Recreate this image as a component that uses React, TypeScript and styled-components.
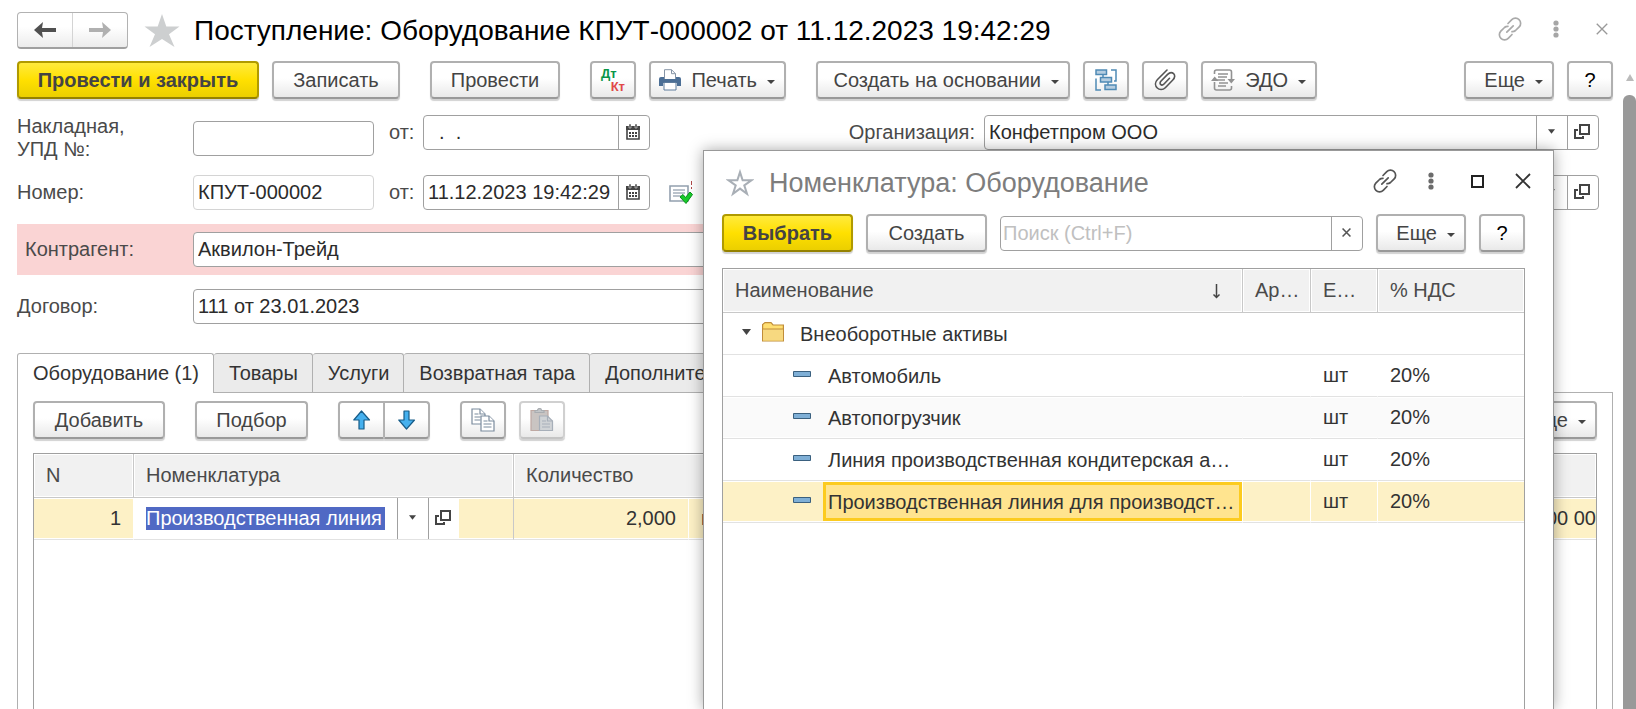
import React from 'react';
import styled, { createGlobalStyle, css } from 'styled-components';

const GlobalStyle = createGlobalStyle`
  *, *::before, *::after { box-sizing: border-box; }
  html, body, #root { height: 100%; }
  body { margin: 0; background: #fff; overflow: hidden; }
  body, button, input { font-family: "Liberation Sans", Arial, sans-serif; font-size: 20px; color: #333; }
  svg { display: block; flex: none; }
`;

const Screen = styled.div`
  position: relative;
  display: flex;
  flex-direction: column;
  height: 100vh;
  min-height: 560px;
  overflow: hidden;
`;

const Header = styled.header`
  display: flex;
  align-items: center;
  height: 61px;
  padding: 0 22px 0 17px;
`;

const NavGroup = styled.div`
  display: flex;
  width: 111px;
  height: 37px;
  border: 1px solid #b2b2b2;
  border-bottom: 2px solid #a0a0a0;
  border-radius: 4px;
  background: linear-gradient(#fff 40%, #ececec);
`;

const NavButton = styled.button`
  flex: 1;
  display: grid;
  place-items: center;
  padding: 0;
  border: 0;
  background: none;
  & + & { border-left: 1px solid #d4d4d4; }
`;

const PageTitle = styled.h1`
  flex: 1;
  margin: 0;
  font-size: 28px;
  line-height: 32px;
  font-weight: 400;
  color: #000;
  white-space: nowrap;
`;

const GhostButton = styled.button`
  display: grid;
  place-items: center;
  padding: 0;
  border: 0;
  background: none;
`;

const ToolButton = styled(GhostButton)`
  width: 24px;
  height: 24px;
`;

const FavButton = styled(GhostButton)`
  margin: 0 14px 0 16px;
`;

const WindowTools = styled.div`
  display: flex;
  align-items: center;
  gap: 22px;
  padding-bottom: 3px;
`;

const Body = styled.div`
  flex: 1;
  display: flex;
  min-height: 0;
`;

const Main = styled.main`
  flex: 1;
  display: flex;
  flex-direction: column;
  min-width: 0;
  padding: 0 10px 0 17px;
`;

const ScrollTrack = styled.div`
  display: flex;
  flex-direction: column;
  align-items: center;
  width: 13px;
  padding-top: 13px;
`;

const ScrollThumb = styled.div`
  flex: 1;
  width: 13px;
  margin-top: 14px;
  border-radius: 6px 6px 0 0;
  background: #999;
`;

const Toolbar = styled.div`
  display: flex;
  gap: 30px;
  height: 38px;
`;

const Group = styled.div<{ $end?: boolean }>`
  display: flex;
  gap: 13px;
  ${p => p.$end && css`margin-left: auto;`}
`;

const Button = styled.button<{ $w: number; $primary?: boolean; $menu?: boolean }>`
  display: flex;
  align-items: center;
  justify-content: ${p => (p.$menu ? 'flex-end' : 'center')};
  gap: 10px;
  flex: none;
  width: ${p => p.$w}px;
  height: 38px;
  padding: ${p => (p.$menu ? '0 9px 0 10px' : '0')};
  border: 2px solid #b0b0b0;
  border-bottom-color: #999;
  border-radius: 4px;
  background: linear-gradient(#fff 45%, #e9e9e9);
  box-shadow: 0 2px 1px #d2d2d2;
  color: #444;
  line-height: 24px;
  white-space: nowrap;
  ${p => p.$primary && css`
    border-color: #b09a00;
    border-bottom-color: #948100;
    background: linear-gradient(#ffea3d, #ffe000 50%, #ebcf00);
    font-weight: 700;
  `}
  &:disabled { border-color: #d0d0d0; border-bottom-color: #c4c4c4; }
`;

const HelpButton = styled(Button)`
  color: #000;
`;

const SplitButton = styled.div`
  display: flex;
  button:first-child { border-radius: 4px 0 0 4px; border-right-width: 1px; }
  button:last-child { border-radius: 0 4px 4px 0; border-left-width: 1px; }
`;

const Postings = styled.span`
  display: flex;
  flex-direction: column;
  width: 24px;
  font-size: 13px;
  font-weight: 700;
  line-height: 13px;
  text-align: left;
  color: #0a9648;
  span:last-child { color: #e04848; text-align: right; }
`;

const Form = styled.form`
  display: grid;
  grid-template-columns: 1fr 1fr;
  column-gap: 24px;
  padding: 16px 14px 0 0;
`;

const Row = styled.div<{ $h: number; $top?: boolean; $alert?: boolean }>`
  grid-column: 1;
  display: flex;
  align-items: ${p => (p.$top ? 'flex-start' : 'center')};
  height: ${p => p.$h}px;
  ${p => p.$alert && css`
    background: #fad4d4;
    label { padding-left: 8px; }
  `}
`;

const RightRow = styled(Row)`
  grid-column: 2;
`;

const Label = styled.label`
  flex: none;
  width: 176px;
  line-height: 23px;
  color: #4a4a4a;
`;

const DateLabel = styled.label`
  flex: none;
  width: 49px;
  padding-left: 15px;
  line-height: 35px;
  color: #4a4a4a;
`;

const SideLabel = styled.label`
  flex: none;
  width: 164px;
  padding-right: 9px;
  line-height: 35px;
  text-align: right;
  color: #4a4a4a;
`;

const Field = styled.div<{ $w?: number; $quiet?: boolean; $mid?: boolean }>`
  display: flex;
  ${p => (p.$w ? css`flex: none; width: ${p.$w}px;` : css`flex: 1; min-width: 0;`)}
  height: 35px;
  border: 1px solid ${p => (p.$quiet ? '#d4d4d4' : '#a0a0a0')};
  border-radius: 4px;
  background: #fff;
  ${p => p.$mid && css`align-self: center;`}
`;

const Input = styled.input`
  flex: 1;
  min-width: 0;
  padding: 0 4px;
  border: 0;
  outline: 0;
  background: none;
  color: #2b2b2b;
  &::placeholder { color: #c0c0c0; opacity: 1; }
`;

const SearchInput = styled(Input)`
  padding: 0 2px;
`;

const Addon = styled.button`
  display: grid;
  place-items: center;
  flex: none;
  width: 31px;
  padding: 0 2px 2px 0;
  border: 0;
  border-left: 1px solid #a0a0a0;
  background: none;
`;

const StatusIcon = styled.span`
  padding-left: 19px;
`;

const Tabs = styled.div`
  display: flex;
  height: 40px;
  margin-top: 15px;
  border-bottom: 1px solid #b0b0b0;
`;

const Tab = styled.button<{ $active?: boolean }>`
  flex: none;
  height: ${p => (p.$active ? 40 : 39)}px;
  padding: 0 14px 0 15px;
  border: 1px solid #b0b0b0;
  border-width: 1px 1px 0 0;
  border-radius: 3px 3px 0 0;
  background: #ebebeb;
  color: #333;
  white-space: nowrap;
  ${p => p.$active && css`border-left-width: 1px; background: #fff;`}
`;

const TabPanel = styled.section`
  flex: 1;
  display: flex;
  flex-direction: column;
  min-height: 0;
  padding: 8px 15px 0;
  border: 1px solid #b0b0b0;
  border-width: 0 1px;
`;

const TableFrame = styled.div<{ $gap: number }>`
  flex: 1;
  min-height: 0;
  margin-top: ${p => p.$gap}px;
  border: 1px solid #a0a0a0;
  border-bottom: 0;
  overflow: hidden;
`;

const Table = styled.table`
  width: 100%;
  table-layout: fixed;
  border-collapse: separate;
  border-spacing: 0;
`;

const Th = styled.th`
  height: 44px;
  padding: 0 12px;
  border-right: 1px solid #c8c8c8;
  border-bottom: 1px solid #c8c8c8;
  background: #f1f1f1;
  box-shadow: inset 0 0 0 1px #fff;
  color: #4a4a4a;
  font-weight: 400;
  text-align: left;
  white-space: nowrap;
  &:last-child { border-right: 0; }
`;

const SortHead = styled.span`
  display: flex;
  align-items: center;
  justify-content: space-between;
  padding-right: 9px;
`;

const Tr = styled.tr<{ $shade?: boolean; $selected?: boolean }>`
  background: ${p => (p.$selected ? '#fdf1c6' : p.$shade ? '#fafafa' : '#fff')};
`;

const Td = styled.td<{ $right?: boolean; $line?: boolean; $flush?: boolean; $split?: boolean }>`
  height: 42px;
  padding: 0 ${p => (p.$flush ? 0 : 12)}px;
  border-right: 1px solid ${p => (p.$line ? '#c8c8c8' : p.$split ? '#fff' : 'transparent')};
  border-bottom: 1px solid #e2e2e2;
  box-shadow: inset 0 1px 0 #fff, inset 0 -1px 0 #fff;
  text-align: ${p => (p.$right ? 'right' : 'left')};
  white-space: nowrap;
  overflow: hidden;
  &:last-child { border-right: 0; }
`;

const Editor = styled.div`
  display: flex;
  width: 325px;
  height: 41px;
  background: #fff;
`;

const EditorText = styled.div`
  flex: 1;
  display: flex;
  align-items: center;
  padding: 0 12px;
`;

const SelectedInput = styled.input`
  width: 100%;
  height: 23px;
  padding: 0;
  border: 0;
  outline: 0;
  background: #5069c4;
  color: #fff;
`;

const Dialog = styled.section`
  position: absolute;
  top: 150px;
  left: 703px;
  right: 82px;
  bottom: 0;
  display: flex;
  flex-direction: column;
  padding: 0 28px 0 18px;
  border: 1px solid #999;
  border-bottom: 0;
  background: #fff;
  box-shadow: 0 0 14px rgba(0, 0, 0, 0.35);
`;

const DialogHeader = styled.div`
  display: flex;
  align-items: center;
  height: 63px;
  margin-right: -10px;
  padding-left: 4px;
`;

const DialogTitle = styled.h2`
  flex: 1;
  margin: 0 0 0 15px;
  font-size: 27px;
  line-height: 32px;
  font-weight: 400;
  color: #7d7d7d;
  white-space: nowrap;
`;

const DialogBar = styled.div`
  display: flex;
  align-items: center;
  gap: 13px;
`;

const TreeCell = styled.div`
  display: flex;
  align-items: center;
  height: 41px;
`;

const Indent = styled.span<{ $w: number; $pad: number }>`
  flex: none;
  display: flex;
  align-items: center;
  gap: 11px;
  width: ${p => p.$w}px;
  padding: 0 0 4px ${p => p.$pad}px;
`;

const ItemText = styled.span<{ $focus?: boolean }>`
  flex: 1;
  height: 39px;
  padding-left: 2px;
  border: 3px solid ${p => (p.$focus ? '#fccb1f' : 'transparent')};
  background: ${p => (p.$focus ? '#ffe48f' : 'transparent')};
  line-height: 34px;
`;

const MenuMark = styled.span`
  padding-top: 3px;
`;

const Caret = () => (
  <MenuMark>
    <svg width="8" height="4" viewBox="0 0 8 4"><path d="M0 0h8L4 4z" fill="#444" /></svg>
  </MenuMark>
);

const DropCaret = ({ wide }: { wide?: boolean }) => (
  <svg width={wide ? 9 : 7} height={wide ? 6 : 5} viewBox="0 0 9 6"><path d="M0 0h9L4.5 6z" fill="#444" /></svg>
);

const OpenIcon = () => (
  <svg width="16" height="16" viewBox="0 0 16 16" fill="none" stroke="#444" strokeWidth="2">
    <path d="M6 1h9v9H6z" /><path d="M4 6H1v8h8v-2" />
  </svg>
);

const CalendarIcon = () => (
  <svg width="14" height="16" viewBox="0 0 14 16">
    <path d="M1 3h12v12H1z" fill="#fff" stroke="#444" strokeWidth="1.6" />
    <path d="M0 2h14v4H0z" fill="#444" /><path d="M3 0h2v4H3zM9 0h2v4H9z" fill="#444" stroke="#fff" strokeWidth=".5" />
    <path d="M3 8h2v2H3zM6 8h2v2H6zM9 8h2v2H9zM3 11h2v2H3zM6 11h2v2H6zM9 11h2v2H9z" fill="#444" />
  </svg>
);

const ArrowIcon = ({ color, flip }: { color: string; flip?: boolean }) => (
  <svg width="22" height="16" viewBox="0 0 22 16">
    <path d={flip ? 'M0 6h14L13 0l9 8-9 8 1-6H0z' : 'M22 6H8l1-6L0 8l9 8-1-6h14z'} fill={color} />
  </svg>
);

const StarIcon = ({ size, filled }: { size: number; filled?: boolean }) => (
  <svg width={size} height={size} viewBox="0 0 36 36">
    <path
      d={filled ? 'M18 1l4.3 12.500H35.500L25 21.300 30.500 34 18 26 5.500 34 11 21.300.5 13.500h13.200z' : 'M18 4l3.400 10.600h11.100l-9 6.500 3.500 10.700L18 25.200l-9 6.600 3.500-10.700-9-6.500h11.100z'}
      fill={filled ? '#cdcfd0' : 'none'} stroke={filled ? 'none' : '#a9afb6'} strokeWidth="2.600"
    />
  </svg>
);

const LinkIcon = ({ color }: { color: string }) => (
  <svg width="24" height="24" viewBox="0 0 24 24" fill="none" stroke={color} strokeWidth="1.7" strokeLinecap="round">
    <path d="M10 6.500l3.800-3.800a4.900 4.900 0 0 1 7.400 7.100l-3.700 3.700a4.900 4.900 0 0 1-3.500 1.200" />
    <path d="M14 17.500l-3.800 3.800a4.900 4.900 0 0 1-7.400-7.100l3.700-3.700a4.900 4.900 0 0 1 3.500-1.200" />
    <path d="M8.800 15.200l6.400-6.400" />
  </svg>
);

const DotsIcon = ({ color }: { color: string }) => (
  <svg width="6" height="18" viewBox="0 0 6 18" fill={color}>
    <circle cx="3" cy="3" r="2.600" /><circle cx="3" cy="9" r="2.600" /><circle cx="3" cy="15" r="2.600" />
  </svg>
);

const CloseIcon = ({ size, color }: { size: number; color: string }) => (
  <svg width={size} height={size} viewBox="0 0 16 16" stroke={color} strokeWidth={size < 12 ? 2.8 : 1.8}><path d="M1 1l14 14M15 1L1 15" /></svg>
);

const SquareIcon = () => (
  <svg width="13" height="13" viewBox="0 0 13 13"><path d="M1 1h11v11H1z" fill="none" stroke="#222" strokeWidth="2" /></svg>
);

const PrinterIcon = () => (
  <svg width="22" height="22" viewBox="0 0 22 22">
    <path d="M5.500 10V.7h7l4 4V10" fill="#fff" stroke="#8594a6" />
    <path d="M12.500.7v4h4" fill="none" stroke="#8594a6" />
    <path d="M2 8h3v2h12V8h3q2 0 2 2v7h-4v-3H4v3H0v-7q0-2 2-2z" fill="#4c6f96" />
    <path d="M5 13.500h12V21H5z" fill="#fff" stroke="#5f7c9c" />
  </svg>
);

const StructureIcon = () => (
  <svg width="22" height="22" viewBox="0 0 22 22" fill="#b5cde0" stroke="#4f8ab5" strokeWidth="1.500">
    <path d="M1 1h10.500v4.500H1zM5.500 8.500h11v4.500h-11zM10 16h11v4.500H10z" />
    <path d="M16 1h5v11h-2M1 9.500v11.500h5M8 5.500v3M13 13v3" fill="none" />
  </svg>
);

const ClipIcon = () => (
  <svg width="22" height="22" viewBox="0 0 22 22" fill="none" stroke="#555" strokeWidth="1.600" strokeLinecap="round">
    <path d="M13 1L3.500 10.500c-3 3-2.200 6.500-.2 8.500s5.500 2.200 8-.3l7.500-7.700c2.500-2.500 2.200-5 .8-6.300s-3.800-1.500-6 .7l-6.500 6.600c-1.200 1.200-1.300 2.600-.5 3.400s2.200.8 3.400-.4l5.500-5.700" />
  </svg>
);

const EdoIcon = () => (
  <svg width="24" height="22" viewBox="0 0 24 22" fill="none" stroke="#929292" strokeWidth="1.600">
    <path d="M3.500 5V3q0-2 2-2h13q2 0 2 2v8M3.500 13v6q0 2 2 2h13q2 0 2-2v-2" />
    <path d="M7 5h10M7 8h9M6 11h8M8 14h9M7 17h8" strokeWidth="1.300" />
    <path d="M0 12l3.700-4.500L7.500 12zM16.500 10h7.500l-3.700 4.500z" fill="#929292" stroke="none" />
  </svg>
);

const BlueArrow = ({ down }: { down?: boolean }) => (
  <svg width="18" height="20" viewBox="0 0 18 20">
    <path d={down ? 'M6 1h5v9h5.500L8.500 19 .8 10H6z' : 'M6 19h5v-9h5.500L8.500 1 .8 10H6z'} fill="#45b0ee" stroke="#175c88" strokeWidth="1.200" strokeLinejoin="round" />
  </svg>
);

const CopyIcon = () => (
  <svg width="24" height="24" viewBox="0 0 24 24" fill="#fff" stroke="#7b8b9d" strokeWidth="1.200">
    <path d="M1 1h8l5 5v10H1z" /><path d="M9 1v5h5M3.500 6h4M3.500 9h6M3.500 12h6" />
    <path d="M10 8h8l5 5v10H10z" /><path d="M18 8v5h5M12.500 13h4M12.500 16h8M12.500 19h8" />
  </svg>
);

const PasteIcon = () => (
  <svg width="24" height="24" viewBox="0 0 24 24" strokeWidth="1.200">
    <path d="M1 2.500h17v20H1z" fill="#c9c4c2" stroke="#bfa9a3" />
    <path d="M5 4.500V2.500h2.500a2 2 0 0 1 4 0H14v2z" fill="#c2c5c8" stroke="#a9adb1" />
    <path d="M9.500 8h8l5 5v9.500h-13z" fill="#d0d3d6" stroke="#a7afb9" />
    <path d="M17.500 8v5h5M12 13h4M12 16h8M12 19h8" fill="none" stroke="#a7afb9" />
  </svg>
);

const PostedIcon = () => (
  <svg width="24" height="24" viewBox="0 0 24 24">
    <path d="M1 5h18v15H1z" fill="#fff" stroke="#93a0ae" strokeWidth="1.600" />
    <path d="M4 9h12M4 12h12M4 15h8" stroke="#a5b0bc" strokeWidth="1.500" />
    <path d="M11 16l3-2.500 2.500 3L21 11l2.500 2.500L17 22.500z" fill="#19cb2a" stroke="#0a8f1b" />
    <path d="M22.500 0v4M22.500 6v2" stroke="#b04a4a" />
  </svg>
);

const SortIcon = () => (
  <svg width="9" height="16" viewBox="0 0 9 16"><path d="M4.500 1v13M1.500 11.500l3 3 3-3" fill="none" stroke="#444" strokeWidth="1.500" /></svg>
);

const FolderIcon = () => (
  <svg width="22" height="20" viewBox="0 0 22 20">
    <path d="M.6 19V2.500L3 .6h6l2 2.400h10.400v16z" fill="#ffdf72" stroke="#c08d3a" strokeWidth="1.200" />
    <path d="M1 7h20v11.500H1z" fill="#f7d980" /><path d="M1 7h20" stroke="#c08d3a" />
  </svg>
);

const ItemIcon = () => (
  <svg width="18" height="6" viewBox="0 0 18 6"><path d="M.5.5h17v5H.5z" fill="#7fafd6" stroke="#3a607f" /></svg>
);

const ITEMS = [
  { name: 'Автомобиль' },
  { name: 'Автопогрузчик', shade: true },
  { name: 'Линия производственная кондитерская а…' },
  { name: 'Производственная линия для производст…', selected: true },
];

const MoreButton = () => <Button type="button" $w={90} $menu>Еще<Caret /></Button>;

const PickerDialog = () => (
  <Dialog role="dialog" aria-labelledby="picker-title">
    <DialogHeader>
      <GhostButton type="button" aria-label="В избранное"><StarIcon size={28} /></GhostButton>
      <DialogTitle id="picker-title">Номенклатура: Оборудование</DialogTitle>
      <WindowTools>
        <ToolButton type="button" aria-label="Ссылка"><LinkIcon color="#555" /></ToolButton>
        <ToolButton type="button" aria-label="Меню"><DotsIcon color="#6b6b6b" /></ToolButton>
        <ToolButton type="button" aria-label="Развернуть"><SquareIcon /></ToolButton>
        <ToolButton type="button" aria-label="Закрыть"><CloseIcon size={16} color="#333" /></ToolButton>
      </WindowTools>
    </DialogHeader>
    <DialogBar>
      <Button type="button" $w={131} $primary>Выбрать</Button>
      <Button type="button" $w={121}>Создать</Button>
      <Field>
        <SearchInput aria-label="Поиск" placeholder="Поиск (Ctrl+F)" />
        <Addon type="button" aria-label="Очистить"><CloseIcon size={9} color="#555" /></Addon>
      </Field>
      <MoreButton />
      <HelpButton type="button" $w={46}>?</HelpButton>
    </DialogBar>
    <TableFrame $gap={16}>
      <Table>
        <colgroup><col /><col width="68" /><col width="67" /><col width="146" /></colgroup>
        <thead>
          <tr>
            <Th><SortHead>Наименование<SortIcon /></SortHead></Th>
            <Th>Ар…</Th>
            <Th>Е…</Th>
            <Th>% НДС</Th>
          </tr>
        </thead>
        <tbody>
          <Tr>
            <Td colSpan={4} $flush>
              <TreeCell>
                <Indent $w={72} $pad={19}><DropCaret wide /><FolderIcon /></Indent>
                <ItemText>Внеоборотные активы</ItemText>
              </TreeCell>
            </Td>
          </Tr>
          {ITEMS.map(item => (
            <Tr key={item.name} $shade={item.shade} $selected={item.selected}>
              <Td $flush $split={item.selected}>
                <TreeCell>
                  <Indent $w={100} $pad={70}><ItemIcon /></Indent>
                  <ItemText $focus={item.selected}>{item.name}</ItemText>
                </TreeCell>
              </Td>
              <Td $split={item.selected} />
              <Td $split={item.selected}>шт</Td>
              <Td>20%</Td>
            </Tr>
          ))}
        </tbody>
      </Table>
    </TableFrame>
  </Dialog>
);

const App = () => (
  <>
    <GlobalStyle />
    <Screen>
      <Header>
        <NavGroup>
          <NavButton type="button" aria-label="Назад"><ArrowIcon color="#505050" /></NavButton>
          <NavButton type="button" aria-label="Вперед"><ArrowIcon color="#b0b0b0" flip /></NavButton>
        </NavGroup>
        <FavButton type="button" aria-label="В избранное"><StarIcon size={36} filled /></FavButton>
        <PageTitle>Поступление: Оборудование КПУТ-000002 от 11.12.2023 19:42:29</PageTitle>
        <WindowTools>
          <ToolButton type="button" aria-label="Ссылка"><LinkIcon color="#aaa" /></ToolButton>
          <ToolButton type="button" aria-label="Меню"><DotsIcon color="#a6a6a6" /></ToolButton>
          <ToolButton type="button" aria-label="Закрыть"><CloseIcon size={12} color="#999" /></ToolButton>
        </WindowTools>
      </Header>

      <Body>
        <Main>
          <Toolbar>
            <Group>
              <Button type="button" $w={242} $primary>Провести и закрыть</Button>
              <Button type="button" $w={128}>Записать</Button>
            </Group>
            <Group><Button type="button" $w={130}>Провести</Button></Group>
            <Group>
              <Button type="button" $w={46}><Postings><span>Дт</span><span>Кт</span></Postings></Button>
              <Button type="button" $w={137} $menu><PrinterIcon />Печать<Caret /></Button>
            </Group>
            <Group>
              <Button type="button" $w={254} $menu>Создать на основании<Caret /></Button>
              <Button type="button" $w={46} aria-label="Структура"><StructureIcon /></Button>
              <Button type="button" $w={46} aria-label="Файлы"><ClipIcon /></Button>
              <Button type="button" $w={116} $menu><EdoIcon />ЭДО<Caret /></Button>
            </Group>
            <Group $end>
              <MoreButton />
              <HelpButton type="button" $w={46}>?</HelpButton>
            </Group>
          </Toolbar>

          <Form>
            <Row $h={46} $top>
              <Label htmlFor="invoice">Накладная,<br />УПД №:</Label>
              <Field $w={181} $mid><Input id="invoice" /></Field>
              <DateLabel htmlFor="invoice-date">от:</DateLabel>
              <Field $w={227}>
                <Input id="invoice-date" defaultValue="  .  ." />
                <Addon type="button" aria-label="Календарь"><CalendarIcon /></Addon>
              </Field>
            </Row>
            <RightRow $h={46} $top>
              <SideLabel htmlFor="org">Организация:</SideLabel>
              <Field>
                <Input id="org" defaultValue="Конфетпром ООО" />
                <Addon type="button" aria-label="Список"><DropCaret /></Addon>
                <Addon type="button" aria-label="Открыть"><OpenIcon /></Addon>
              </Field>
            </RightRow>
            <Row $h={63}>
              <Label htmlFor="number">Номер:</Label>
              <Field $w={181} $quiet><Input id="number" defaultValue="КПУТ-000002" /></Field>
              <DateLabel htmlFor="number-date">от:</DateLabel>
              <Field $w={227}>
                <Input id="number-date" defaultValue="11.12.2023 19:42:29" />
                <Addon type="button" aria-label="Календарь"><CalendarIcon /></Addon>
              </Field>
              <StatusIcon><PostedIcon /></StatusIcon>
            </Row>
            <RightRow $h={63}>
              <SideLabel />
              <Field>
                <Input aria-label="Склад" />
                <Addon type="button" aria-label="Список"><DropCaret /></Addon>
                <Addon type="button" aria-label="Открыть"><OpenIcon /></Addon>
              </Field>
            </RightRow>
            <Row $h={51} $alert>
              <Label htmlFor="partner">Контрагент:</Label>
              <Field><Input id="partner" defaultValue="Аквилон-Трейд" /></Field>
            </Row>
            <Row $h={63}>
              <Label htmlFor="contract">Договор:</Label>
              <Field><Input id="contract" defaultValue="111 от 23.01.2023" /></Field>
            </Row>
          </Form>

          <Tabs role="tablist">
            <Tab type="button" role="tab" aria-selected $active>Оборудование (1)</Tab>
            <Tab type="button" role="tab">Товары</Tab>
            <Tab type="button" role="tab">Услуги</Tab>
            <Tab type="button" role="tab">Возвратная тара</Tab>
            <Tab type="button" role="tab">Дополнительно</Tab>
          </Tabs>

          <TabPanel role="tabpanel">
            <Toolbar>
              <Button type="button" $w={132}>Добавить</Button>
              <Button type="button" $w={113}>Подбор</Button>
              <SplitButton>
                <Button type="button" $w={46} aria-label="Вверх"><BlueArrow /></Button>
                <Button type="button" $w={46} aria-label="Вниз"><BlueArrow down /></Button>
              </SplitButton>
              <Group>
                <Button type="button" $w={46} aria-label="Копировать"><CopyIcon /></Button>
                <Button type="button" $w={46} aria-label="Вставить" disabled><PasteIcon /></Button>
              </Group>
              <Group $end><MoreButton /></Group>
            </Toolbar>
            <TableFrame $gap={14}>
              <Table>
                <colgroup><col width="100" /><col width="380" /><col width="175" /><col width="200" /><col /></colgroup>
                <thead>
                  <tr><Th>N</Th><Th>Номенклатура</Th><Th colSpan={3}>Количество</Th></tr>
                </thead>
                <tbody>
                  <Tr $selected>
                    <Td $right $split>1</Td>
                    <Td $flush $line>
                      <Editor>
                        <EditorText>
                          <SelectedInput aria-label="Номенклатура" defaultValue="Производственная линия для производства" />
                        </EditorText>
                        <Addon type="button" aria-label="Список"><DropCaret /></Addon>
                        <Addon type="button" aria-label="Открыть"><OpenIcon /></Addon>
                      </Editor>
                    </Td>
                    <Td $right $split>2,000</Td>
                    <Td>шт</Td>
                    <Td $right $flush>00 00</Td>
                  </Tr>
                </tbody>
              </Table>
            </TableFrame>
          </TabPanel>
        </Main>
        <ScrollTrack>
          <svg width="8" height="7" viewBox="0 0 8 7"><path d="M0 7h8L4 0z" fill="#bbb" /></svg>
          <ScrollThumb />
        </ScrollTrack>
      </Body>

      <PickerDialog />
    </Screen>
  </>
);

export default App;
